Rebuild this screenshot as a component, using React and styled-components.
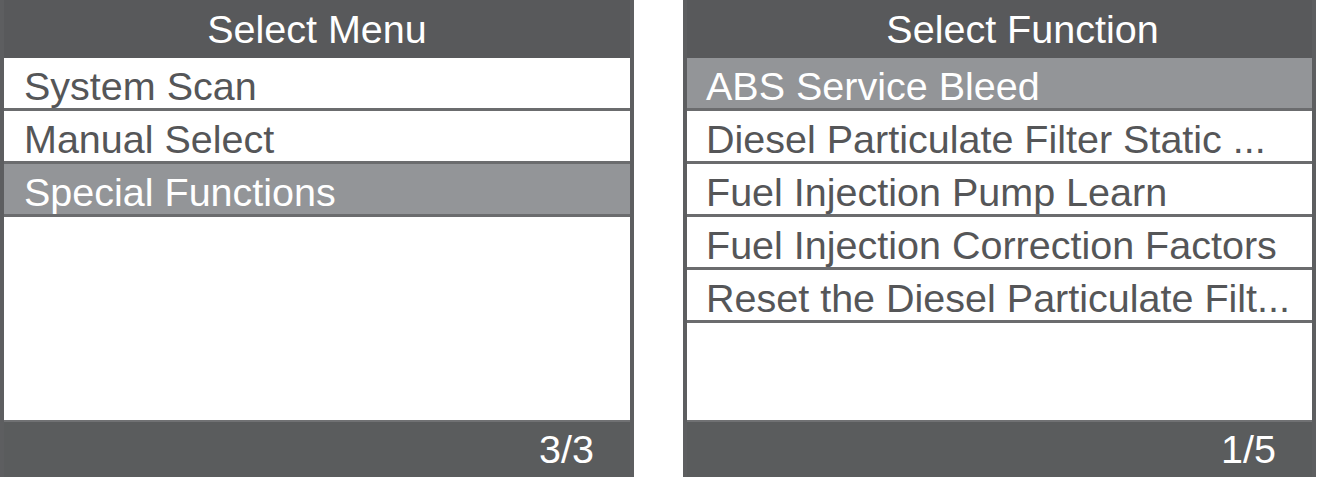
import React from "react";
import styled, { createGlobalStyle } from "styled-components";

const Global = createGlobalStyle`
  html, body { margin: 0; padding: 0; background: #ffffff; }
  body { font-family: "Liberation Sans", Arial, sans-serif; }
`;

const Page = styled.div`
  display: flex;
  gap: 49px;
  width: 1321px;
  height: 483px;
  box-sizing: border-box;
  background: #fff;
`;

const Panel = styled.section`
  display: flex;
  flex-direction: column;
  width: ${(p) => p.$width}px;
  height: 477px;
  box-sizing: border-box;
  border-left: 4px solid #5d5e60;
  border-right: 4px solid #5d5e60;
  background: #fff;
`;

const Header = styled.div`
  height: 58px;
  flex: none;
  background: #58595b;
  color: #fff;
  font-size: 39.5px;
  line-height: 58px;
  text-align: center;
  padding-left: ${(p) => p.$shift || 0}px;
  box-sizing: border-box;
`;

const List = styled.div`
  flex: 1;
  display: flex;
  flex-direction: column;
`;

const Row = styled.div`
  height: 50px;
  flex: none;
  border-bottom: 3px solid #6b6c6e;
  background: ${(p) => (p.$active ? "#939598" : "#ffffff")};
  color: ${(p) => (p.$active ? "#ffffff" : "#555658")};
  font-size: 39.5px;
  line-height: 56px;
  padding-left: ${(p) => p.$pad}px;
  white-space: nowrap;
  overflow: hidden;
`;

const Footer = styled.div`
  height: 57px;
  flex: none;
  box-sizing: border-box;
  background: #5a5c5d;
  border-top: 2px solid #707173;
  color: #fff;
  font-size: 39.5px;
  line-height: 55px;
  text-align: right;
  padding-right: ${(p) => p.$pad}px;
`;

const menus = [
  {
    title: "Select Menu",
    width: 634,
    shift: 0,
    pad: 20,
    footPad: 36,
    active: 2,
    items: ["System Scan", "Manual Select", "Special Functions"],
    page: "3/3",
  },
  {
    title: "Select Function",
    width: 633,
    shift: 46,
    pad: 19,
    footPad: 36,
    active: 0,
    items: [
      "ABS Service Bleed",
      "Diesel Particulate Filter Static ...",
      "Fuel Injection Pump Learn",
      "Fuel Injection Correction Factors",
      "Reset the Diesel Particulate Filt...",
    ],
    page: "1/5",
  },
];

export default function App() {
  return (
    <>
      <Global />
      <Page>
        {menus.map((m) => (
          <Panel key={m.title} $width={m.width}>
            <Header $shift={m.shift}>{m.title}</Header>
            <List>
              {m.items.map((it, i) => (
                <Row key={it} $active={i === m.active} $pad={m.pad}>
                  {it}
                </Row>
              ))}
            </List>
            <Footer $pad={m.footPad}>{m.page}</Footer>
          </Panel>
        ))}
      </Page>
    </>
  );
}
